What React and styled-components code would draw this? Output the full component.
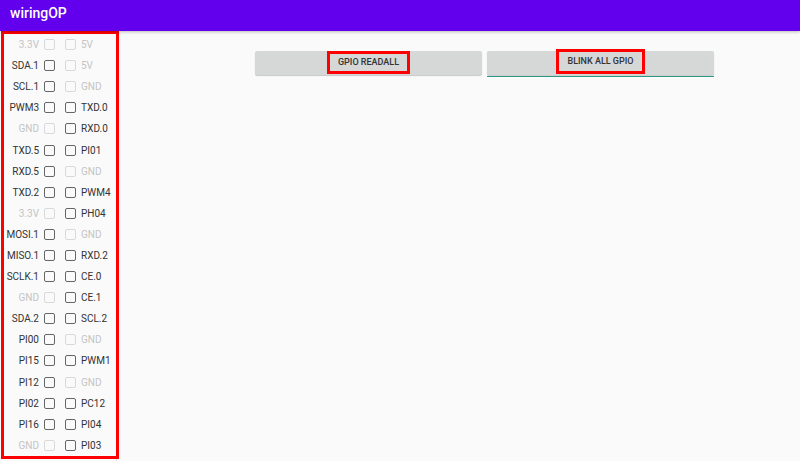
import React from 'react';
import styled, { createGlobalStyle } from 'styled-components';

const GlobalStyle = createGlobalStyle`
  html, body {
    margin: 0;
    padding: 0;
    background: #fafafa;
    font-family: Roboto, "Noto Sans", "Liberation Sans", sans-serif;
  }
`;

const Screen = styled.div`
  width: 800px;
  height: 461px;
  display: flex;
  flex-direction: column;
  overflow: hidden;
  background: #fafafa;
`;

const AppBar = styled.header`
  height: 31px;
  flex-shrink: 0;
  background: #6200ee;
  color: white;
  display: flex;
  align-items: center;
  padding-left: 10px;
  padding-bottom: 5px;
  box-sizing: border-box;
  font-size: 14px;
  font-weight: 500;
  box-shadow: 0 1px 3px rgba(0, 0, 0, 0.25);
  position: relative;
  z-index: 1;
`;

const Body = styled.div`
  flex: 1;
  display: flex;
`;

const PinPanel = styled.aside`
  width: 117px;
  flex-shrink: 0;
  border-right: 1px solid #e2e2e2;
  padding: 0 1px 2px 1px;
  box-sizing: border-box;
  display: flex;
`;

const Highlight = styled.div`
  flex: 1;
  border: 3px solid #ff0000;
  display: flex;
  flex-direction: column;
`;

const PinRow = styled.div`
  height: 21.1px;
  display: flex;
  align-items: center;
  font-size: 10px;
`;

const PinLabel = styled.span`
  width: 35px;
  flex-shrink: 0;
  text-align: ${p => (p.$side === 'left' ? 'right' : 'left')};
  color: ${p => (p.$off ? '#c4c4c4' : '#333')};
  white-space: nowrap;
`;

const Check = styled.span`
  width: 11px;
  height: 11px;
  box-sizing: border-box;
  border: 1.5px solid ${p => (p.$off ? '#d9d9d9' : '#666')};
  border-radius: 2px;
  margin: ${p => (p.$side === 'left' ? '0 10px 0 5px' : '0 5px 0 0')};
  flex-shrink: 0;
`;

const Main = styled.main`
  flex: 1;
  padding: 20px 0 0 138px;
  display: flex;
  align-items: flex-start;
  gap: 5px;
`;

const ActionButton = styled.button`
  width: 227px;
  height: 24px;
  border: none;
  border-radius: 2px;
  background: #d6d7d7;
  box-shadow: 0 1px 1px rgba(0, 0, 0, 0.2);
  font-family: inherit;
  font-size: 9px;
  font-weight: 500;
  color: #333;
  display: flex;
  align-items: center;
  justify-content: center;
  padding: 0;
  position: relative;

  &.focused::after {
    content: '';
    position: absolute;
    left: 0;
    right: 0;
    bottom: -2px;
    height: 1.5px;
    background: #2e9985;
  }
`;

const Marker = styled.span`
  border: 3px solid #ff0000;
  padding: ${p => p.$pad};
  margin-top: ${p => p.$shift};
  line-height: 11px;
  position: relative;
  z-index: 1;
`;

const pins = [
  ['3.3V', true, '5V', true],
  ['SDA.1', false, '5V', true],
  ['SCL.1', false, 'GND', true],
  ['PWM3', false, 'TXD.0', false],
  ['GND', true, 'RXD.0', false],
  ['TXD.5', false, 'PI01', false],
  ['RXD.5', false, 'GND', true],
  ['TXD.2', false, 'PWM4', false],
  ['3.3V', true, 'PH04', false],
  ['MOSI.1', false, 'GND', true],
  ['MISO.1', false, 'RXD.2', false],
  ['SCLK.1', false, 'CE.0', false],
  ['GND', true, 'CE.1', false],
  ['SDA.2', false, 'SCL.2', false],
  ['PI00', false, 'GND', true],
  ['PI15', false, 'PWM1', false],
  ['PI12', false, 'GND', true],
  ['PI02', false, 'PC12', false],
  ['PI16', false, 'PI04', false],
  ['GND', true, 'PI03', false],
];

const App = () => (
  <Screen>
    <GlobalStyle />
    <AppBar>wiringOP</AppBar>
    <Body>
      <PinPanel>
        <Highlight>
          {pins.map(([left, leftOff, right, rightOff], i) => (
            <PinRow key={i}>
              <PinLabel $side="left" $off={leftOff}>{left}</PinLabel>
              <Check $side="left" $off={leftOff} />
              <Check $side="right" $off={rightOff} />
              <PinLabel $side="right" $off={rightOff}>{right}</PinLabel>
            </PinRow>
          ))}
        </Highlight>
      </PinPanel>
      <Main>
        <ActionButton>
          <Marker $pad="3px 8px" $shift="-1px">GPIO READALL</Marker>
        </ActionButton>
        <ActionButton className="focused">
          <Marker $pad="4px 9px" $shift="-3px">BLINK ALL GPIO</Marker>
        </ActionButton>
      </Main>
    </Body>
  </Screen>
);

export default App;
